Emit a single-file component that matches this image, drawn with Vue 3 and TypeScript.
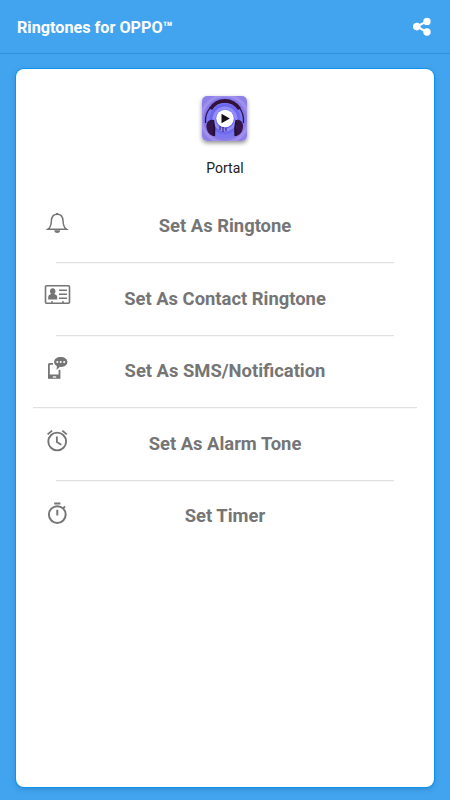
<script setup lang="ts">
interface Action {
  id: string
  label: string
  wide?: boolean
}

const actions: Action[] = [
  { id: 'ringtone', label: 'Set As Ringtone' },
  { id: 'contact', label: 'Set As Contact Ringtone' },
  { id: 'sms', label: 'Set As SMS/Notification', wide: true },
  { id: 'alarm', label: 'Set As Alarm Tone' },
  { id: 'timer', label: 'Set Timer' },
]
</script>

<template>
  <div class="screen">
    <header class="bar">
      <h1 class="title">Ringtones for OPPO™</h1>
      <svg class="share" viewBox="0 0 20 20" aria-hidden="true">
        <path d="M14.800 4.400 4.900 9.600l9.900 5.400" fill="none" stroke="#fff" stroke-width="2.200" />
        <circle cx="15" cy="4.400" r="3.700" fill="#fff" />
        <circle cx="4.800" cy="9.600" r="3.800" fill="#fff" />
        <circle cx="15" cy="15" r="3.700" fill="#fff" />
      </svg>
    </header>

    <main class="card">
      <svg class="cover" viewBox="0 0 45 45" aria-hidden="true">
        <defs>
          <radialGradient id="bg">
            <stop offset="0" stop-color="#5450e4" />
            <stop offset=".55" stop-color="#6963ee" />
            <stop offset="1" stop-color="#8d80e9" />
          </radialGradient>
        </defs>
        <rect width="45" height="45" fill="url(#bg)" />
        <g fill="none" stroke-width="3">
          <circle cx="23" cy="23" r="11" stroke="#918cfa" />
          <circle cx="23" cy="23" r="17" stroke="#7b78f4" />
          <circle cx="23" cy="23" r="23.500" stroke="#a18fec" />
        </g>
        <path d="M3.500 27C2.500 14 11 6 23 6s19.500 8 18.500 21" fill="none" stroke="#2c133f" stroke-width="1.300" />
        <path d="M8.500 13C15.500 2.200 30 2.200 37.500 13" fill="none" stroke="#321238" stroke-width="3.600" />
        <path d="M10 23.500c-5 1-6.500 5-5 10 1 4 4 6.500 7.500 6.500zM35.500 23.500c5 1 6.500 5 5 10-1 4-4 6.500-7.500 6.500z" fill="#351449" />
        <path d="M11 24q2 8 1 16M34.500 24q-2 8-1 16" fill="none" stroke="#21102f" stroke-width="2.200" />
        <path d="M18 30v4m3-3v5m3-4v3" stroke="#302068" stroke-width="1" />
        <circle cx="23" cy="22.500" r="8.800" fill="#fff" />
        <path d="m19.500 17.700 8.300 4.800-8.300 4.800z" fill="#141217" />
      </svg>
      <p class="name">Portal</p>

      <ul class="list">
        <li v-for="a in actions" :key="a.id" class="row" :class="{ wide: a.wide }">
          <svg class="icon" viewBox="0 0 30 30" aria-hidden="true">
            <template v-if="a.id === 'ringtone'">
              <path d="M6 21.200c3-2 3.200-5 3.400-8.500C9.600 8.500 12 6.200 15.200 6.200s5.600 2.300 5.800 6.500c.2 3.500.4 6.500 3.400 8.500z" class="line" stroke-width="1.500" />
              <path d="M13.800 6.200a1.400 1.500 0 0 1 2.800 0M12.300 22.200h5.800a2.900 2.700 0 0 1-5.800 0" class="solid" />
            </template>
            <template v-else-if="a.id === 'contact'">
              <rect x="3.500" y="4.800" width="24" height="17.400" rx="1" class="line" stroke-width="1.600" />
              <ellipse cx="10.700" cy="10.200" rx="2.700" ry="2.900" class="solid" />
              <path d="M6.200 18.500v-2.200c0-2 1.300-2.800 3-3.200h3c1.700.4 3 1.200 3 3.200v2.200z" class="solid" />
              <path d="M17 9.300h8M17 13.300h8M17 17.300h8M10 20v2M21 20v2" class="line" stroke-width="1.400" />
            </template>
            <template v-else-if="a.id === 'sms'">
              <path d="M11 10.900H7.600a.7.700 0 0 0-.7.700v13.200h10.600v-8" class="line" stroke-width="1.800" />
              <path d="M6.500 21.500H18v3.800H6.500z" class="solid" />
              <path d="M10.800 24h3.400" stroke="#fff" stroke-width="1.300" />
              <path d="M18.700 4c3.900 0 6.700 2.100 6.700 4.900s-2.800 5-6.700 5l-1-.1c-.8 1.500-2 2.500-3.600 2.800.7-1 .9-2.300.7-3.700-1.700-.9-2.700-2.300-2.700-4 0-2.800 2.800-4.900 6.600-4.900" class="solid" />
              <circle cx="15.300" cy="9" r="1" fill="#fff" />
              <circle cx="18.700" cy="9" r="1" fill="#fff" />
              <circle cx="22.100" cy="9" r="1" fill="#fff" />
            </template>
            <template v-else-if="a.id === 'alarm'">
              <circle cx="15.200" cy="15.500" r="8.900" class="line" stroke-width="1.900" />
              <path d="m5.600 8.400 4.500-3.800m14.700 3.800-4.500-3.800M14.900 10.500v5.500l4.400 2.800" class="line" stroke-width="1.800" />
            </template>
            <template v-else>
              <circle cx="15.300" cy="16.600" r="8.400" class="line" stroke-width="2" />
              <path d="M12.200 5.500h6.200M21.200 10.200l1.800-1.700" class="line" stroke-width="1.800" />
              <path d="M15.300 11.800v5.700" class="line" stroke-width="2" />
            </template>
          </svg>
          <span class="label">{{ a.label }}</span>
        </li>
      </ul>
    </main>
  </div>
</template>

<style>
body {
  margin: 0;
}
</style>

<style scoped>
.screen {
  box-sizing: border-box;
  height: 800px;
  background: #42a3ee;
  font-family: Roboto, sans-serif;
  overflow: hidden;
}
.bar {
  box-sizing: border-box;
  height: 54px;
  padding: 0 18px 0 17px;
  display: flex;
  align-items: center;
  justify-content: space-between;
  border-bottom: 1px solid #348fd9;
}
.title {
  margin: 2px 0 0;
  color: #fff;
  font-size: 16.200px;
  line-height: 20px;
  font-weight: 700;
}
.share {
  width: 20px;
  height: 20px;
}
.card {
  box-sizing: border-box;
  height: 718px;
  margin: 15px 16px 0;
  padding-top: 27px;
  display: flex;
  flex-direction: column;
  align-items: center;
  background: #fff;
  border-radius: 8px;
  box-shadow: 0 0 0 1px #0c94ed, 0 2px 5px #1c6fae80;
}
.cover {
  width: 45px;
  height: 45px;
  margin-right: 1px;
  border-radius: 5px;
  box-shadow: 0 2px 4px #00000070;
}
.name {
  margin: 17px 0 0;
  color: #202020;
  font-size: 14px;
  line-height: 20px;
}
.list {
  align-self: stretch;
  list-style: none;
  margin: 12px 0 0;
  padding: 0;
}
.row {
  --inset: 40px;
  box-sizing: border-box;
  height: 72.5px;
  padding-top: 18px;
  display: grid;
  grid-template-columns: 26px 30px 1fr 56px;
  grid-template-rows: 36px 1fr;
}
.row::after {
  content: '';
  grid-column: 1 / -1;
  grid-row: 2;
  align-self: end;
  height: 1px;
  margin: 0 var(--inset) -0.5px;
  background: #e0e0e0;
  box-shadow: 0 1px 0 #f8f8f8;
}
.row.wide {
  --inset: 17px;
}
.row:last-child::after {
  content: none;
}
.icon {
  grid-column: 2;
  width: 30px;
  height: 30px;
}
.label {
  grid-column: 3;
  color: #757575;
  font-size: 18.400px;
  line-height: 36px;
  font-weight: 700;
  text-align: center;
  white-space: nowrap;
}
.line {
  fill: none;
  stroke: #757575;
}
.solid {
  fill: #757575;
}
</style>
